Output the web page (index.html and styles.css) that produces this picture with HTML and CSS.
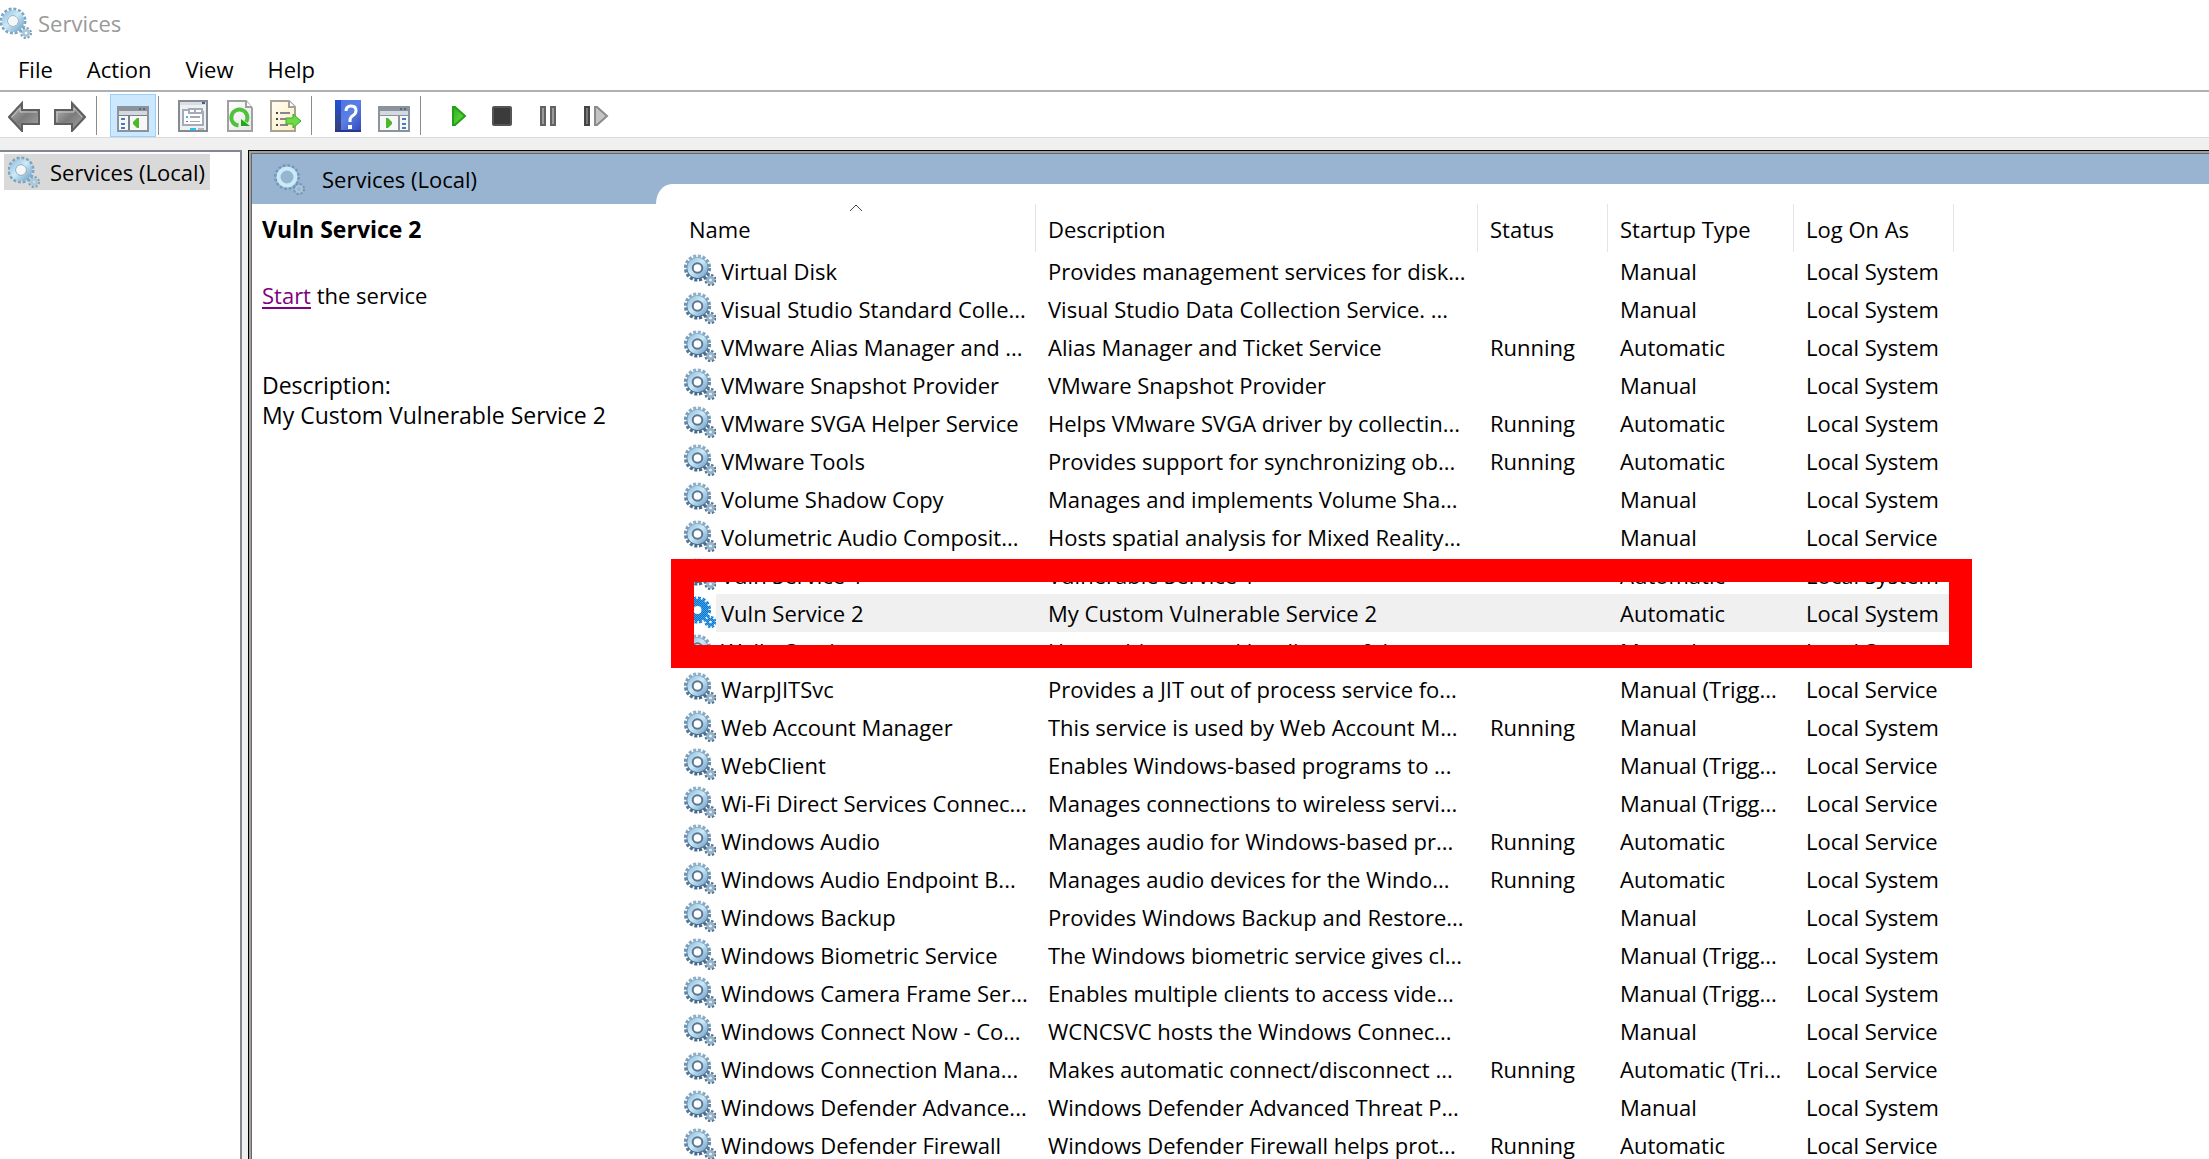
FILE: index.html
```html
<!DOCTYPE html>
<html lang="en">
<head>
<meta charset="utf-8">
<title>Services</title>
<link rel="stylesheet" href="styles.css">
</head>
<body>
<svg class="defs" aria-hidden="true">
  <defs>
    <linearGradient id="arrow" x1="0" y1="0" x2="1" y2="1"><stop offset="0" stop-color="#bdbdbd"/><stop offset=".5" stop-color="#7b7b7b"/><stop offset="1" stop-color="#a8a8a8"/></linearGradient>
    <linearGradient id="page" x1="0" y1="0" x2="1" y2="1"><stop offset="0" stop-color="#fff"/><stop offset="1" stop-color="#e6e6e6"/></linearGradient>
    <linearGradient id="cream" x1="0" y1="0" x2="1" y2="1"><stop offset="0" stop-color="#fffdf5"/><stop offset="1" stop-color="#fbeebc"/></linearGradient>
    <linearGradient id="book" x1="0" y1="0" x2="1" y2="1"><stop offset="0" stop-color="#4a6fe8"/><stop offset=".5" stop-color="#5b7fe6"/><stop offset="1" stop-color="#3148b8"/></linearGradient>
    <linearGradient id="spine" x1="0" y1="0" x2="0" y2="1"><stop offset="0" stop-color="#1f52d6"/><stop offset="1" stop-color="#3a3f70"/></linearGradient>
    <linearGradient id="green" x1="0" y1="0" x2="1" y2="1"><stop offset="0" stop-color="#2fae1c"/><stop offset="1" stop-color="#6be04a"/></linearGradient>
    <linearGradient id="teeth" x1="0" y1="0" x2="0" y2="1"><stop offset="0" stop-color="#8db1cb"/><stop offset="1" stop-color="#45698c"/></linearGradient>
    <linearGradient id="body" x1="0" y1="0" x2="1" y2="1"><stop offset="0" stop-color="#9cc6e0"/><stop offset=".45" stop-color="#cdebf8"/><stop offset="1" stop-color="#7dabcf"/></linearGradient>
    <pattern id="dither" width="2" height="2" patternUnits="userSpaceOnUse"><rect width="2" height="2" fill="#0078d7"/><rect width="1" height="1" fill="#4f9fdc"/><rect x="1" y="1" width="1" height="1" fill="#4f9fdc"/></pattern>
    <symbol id="gear" viewBox="0 0 32 32">
      <circle cx="26.500" cy="26" r="4.800" fill="none" stroke="#56758f" stroke-width="2.600" stroke-dasharray="2.300 1.470"/>
      <circle cx="26.500" cy="26" r="2.800" fill="none" stroke="#94b1c7" stroke-width="3"/>
      <circle cx="26.500" cy="26" r="1.300" fill="#dce9f1"/>
      <circle cx="13.500" cy="14" r="11.800" fill="none" stroke="url(#teeth)" stroke-width="3.600" stroke-dasharray="3 1.634"/>
      <circle cx="13.500" cy="14" r="10.400" fill="none" stroke="url(#teeth)" stroke-width="1.400"/>
      <circle cx="13.500" cy="14" r="7.600" fill="none" stroke="url(#body)" stroke-width="5"/>
      <circle cx="13.500" cy="14" r="4.800" fill="none" stroke="#5b7491" stroke-width="2"/>
    </symbol>
    <symbol id="gear-light" viewBox="0 0 32 32">
      <circle cx="26" cy="26" r="4.800" fill="none" stroke="#7fa0b8" stroke-width="2.500" stroke-dasharray="2.100 1.670"/>
      <circle cx="26" cy="26" r="2.800" fill="none" stroke="#a9c8dc" stroke-width="3"/>
      <circle cx="13" cy="14" r="11.800" fill="none" stroke="#7ba6c5" stroke-width="3.400" stroke-dasharray="2.900 1.734"/>
      <circle cx="13" cy="14" r="8.300" fill="none" stroke="url(#body)" stroke-width="5.600"/>
      <circle cx="13" cy="14" r="5.300" fill="none" stroke="#8aa9c0" stroke-width="1"/>
      <circle cx="13" cy="14" r="4.800" fill="#f4f6f8"/>
    </symbol>
    <symbol id="gear-tab" viewBox="0 0 32 32">
      <circle cx="25" cy="26" r="4.800" fill="none" stroke="#7592b0" stroke-width="2.500" stroke-dasharray="2.100 1.670"/>
      <circle cx="25" cy="26" r="3" fill="none" stroke="#a9c5db" stroke-width="2"/>
      <circle cx="13" cy="14" r="11.500" fill="none" stroke="#7597b8" stroke-width="3" stroke-dasharray="2.600 1.916"/>
      <circle cx="13" cy="14" r="8.500" fill="none" stroke="#c8ebf8" stroke-width="4"/>
    </symbol>
    <symbol id="gear-selected" viewBox="0 0 32 32">
      <circle cx="26.500" cy="26" r="4.800" fill="none" stroke="url(#dither)" stroke-width="2.600" stroke-dasharray="2.300 1.470"/>
      <circle cx="26.500" cy="26" r="2.800" fill="none" stroke="url(#dither)" stroke-width="3"/>
      <circle cx="13.500" cy="14" r="11.800" fill="none" stroke="url(#dither)" stroke-width="3.600" stroke-dasharray="3 1.634"/>
      <circle cx="13.500" cy="14" r="7.500" fill="none" stroke="url(#dither)" stroke-width="7"/>
    </symbol>
  </defs>
</svg>

<header class="titlebar">
  <svg class="icon"><use href="#gear-light"/></svg>
  <h1>Services</h1>
</header>

<nav class="menubar">
  <button>File</button>
  <button>Action</button>
  <button>View</button>
  <button>Help</button>
</nav>

<div class="toolbar" role="toolbar" aria-label="Standard">
  <button aria-label="Back"><svg class="icon"><path d="M1 17 14 3v7h17v14H14v7z" fill="url(#arrow)" stroke="#5f5f5f" stroke-width="2"/><path d="M4 17 12 8v4h17" fill="none" stroke="#c9c9c9"/></svg></button>
  <button aria-label="Forward"><svg class="icon"><path d="M31 17 18 3v7H1v14h17v7z" fill="url(#arrow)" stroke="#5f5f5f" stroke-width="2"/><path d="M3 22V12h17V8l8 9" fill="none" stroke="#c9c9c9"/></svg></button>
  <span class="sep"></span>
  <button class="pressed" aria-label="Show or hide console tree" aria-pressed="true"><svg class="icon"><path d="M1 7h30v24H1z" fill="#f7f7f7" stroke="#8b939c" stroke-width="2"/><path d="M2 8h28v3H2z" fill="#8b939c"/><path d="M2 11h28v5H2z" fill="#d3d9de"/><path d="M22 8h2v2h-2zM26 8h2v2h-2z" fill="#53687f"/><path d="M2 15h28v1H2zM11 16h2v14h-2z" fill="#77818d"/><path d="M4 18h4v2H4zM4 23h4v2H4zM4 27h4v2H4z" fill="#3f7dc4"/><path d="M22 18v10h-2l-4-4v-2l4-4z" fill="#4bb82c"/></svg></button>
  <span class="sep near"></span>
  <button aria-label="Properties"><svg class="icon"><path d="M2 1h28v30H2z" fill="#eef0f2" stroke="#858b93" stroke-width="2"/><path d="M3 2h26v3H3z" fill="#d8dee4"/><path d="M25 2h3v2h-3z" fill="#435b7c"/><path d="M6 10h6v-1h13v3h1v13H6z" fill="#fff" stroke="#a6abb9" stroke-width="2"/><path d="M12 9v4h13M18 9v4" fill="none" stroke="#a6abb9" stroke-width="2"/><path d="M9 16h2v2H9z" fill="#25c5f5"/><path d="M9 21h2v1H9z" fill="#777"/><path d="M13 16h10v2H13zM13 21h10v1H13z" fill="#a5a9ad"/><path d="M13 28h6v2h-6z" fill="#17c8ff"/><path d="M21 28h6v2h-6z" fill="#b5b9bd"/></svg></button>
  <button aria-label="Refresh"><svg class="icon"><path d="M5 1h18l6 7v23H5z" fill="url(#page)" stroke="#a0a0a0" stroke-width="2"/><path d="M23 1v6h6" fill="#fff" stroke="#a0a0a0" stroke-width="2"/><path d="M15.500 25.500A8 8 0 1 1 23 22" fill="none" stroke="#4ec23a" stroke-width="4"/><path d="M18 19v7h9z" fill="#22a816"/></svg></button>
  <button aria-label="Export list"><svg class="icon"><path d="M2 1h18l6 6v24H2z" fill="url(#cream)" stroke="#a8a294" stroke-width="2"/><path d="M20 1v6h6" fill="#fff" stroke="#a0a0a0" stroke-width="2"/><path d="M7 12h2v2H7zM7 18h2v2H7zM7 24h2v2H7z" fill="#444"/><path d="M11 12h10v2H11zM11 18h8v2h-8zM11 24h8v2h-8z" fill="#8b8396"/><path d="M17 18h7v-4l8 7-8 7v-4h-7z" fill="#6edb46" stroke="#3aad26"/></svg></button>
  <span class="sep"></span>
  <button aria-label="Help"><svg class="icon"><path d="M3 0h26v32H3z" fill="url(#book)"/><path d="M3 0h6v32H3z" fill="url(#spine)"/><path d="M3 30h26v2H3z" fill="#27378f"/><path d="M14 11q0-5 5-5t5 4.500q0 3-3 5t-3 4.500v2" fill="none" stroke="#fff" stroke-width="3"/><path d="M16 25h4v4h-4z" fill="#fff"/></svg></button>
  <button aria-label="Show or hide action pane"><svg class="icon"><path d="M1 7h30v24H1z" fill="#f7f7f7" stroke="#8b939c" stroke-width="2"/><path d="M2 8h28v3H2z" fill="#8b939c"/><path d="M2 11h28v5H2z" fill="#d3d9de"/><path d="M22 8h2v2h-2zM26 8h2v2h-2z" fill="#53687f"/><path d="M2 15h28v1H2zM20 16h2v14h-2z" fill="#8b939c"/><path d="M24 18h4v2h-4zM24 23h4v2h-4zM24 27h4v2h-4z" fill="#3f7dc4"/><path d="M8 18v10h2l4-4v-2l-4-4z" fill="#4bb82c"/></svg></button>
  <span class="sep wide"></span>
  <button aria-label="Start service"><svg class="icon"><path d="M14 7v18h2l10-9-10-9z" fill="url(#green)" stroke="#23a018" stroke-width="2"/></svg></button>
  <button aria-label="Stop service"><svg class="icon"><rect x="8" y="7" width="18" height="18" rx="1" fill="#3b3b3b" stroke="#555" stroke-width="2"/></svg></button>
  <button aria-label="Pause service"><svg class="icon"><path d="M10 7h4v18h-4zM20 7h4v18h-4z" fill="#999" stroke="#616161" stroke-width="2"/></svg></button>
  <button aria-label="Restart service"><svg class="icon"><path d="M8 7h4v18H8z" fill="#777" stroke="#444" stroke-width="2"/><path d="M18 7v18h2l10-9-10-9z" fill="#c4c4c4" stroke="#8b8b8b" stroke-width="2"/></svg></button>
</div>

<main class="workspace">
  <aside class="tree">
    <a class="node" href="#services"><svg class="icon"><use href="#gear-light"/></svg>Services (Local)</a>
  </aside>

  <section class="pane" id="services">
    <div class="band"><svg class="icon"><use href="#gear-tab"/></svg><h2>Services (Local)</h2></div>
    <div class="split">
      <div class="details">
        <h3>Vuln Service 2</h3>
        <p class="action"><a href="#start">Start</a> the service</p>
        <p class="description">Description:<br>My Custom Vulnerable Service 2</p>
      </div>
      <div class="list">
        <table>
          <colgroup><col class="c-name"><col class="c-desc"><col class="c-status"><col class="c-startup"><col class="c-logon"></colgroup>
          <thead>
            <tr>
              <th aria-sort="ascending">Name<svg class="caret" viewBox="0 0 14 8"><path d="M1 7l6-6 6 6" fill="none" stroke="#444"/></svg></th>
              <th>Description</th><th>Status</th><th>Startup Type</th><th>Log On As</th>
            </tr>
          </thead>
          <tbody>
            <tr><td><svg class="icon"><use href="#gear"/></svg>Virtual Disk</td><td>Provides management services for disk...</td><td></td><td>Manual</td><td>Local System</td></tr>
            <tr><td><svg class="icon"><use href="#gear"/></svg>Visual Studio Standard Colle...</td><td>Visual Studio Data Collection Service. ...</td><td></td><td>Manual</td><td>Local System</td></tr>
            <tr><td><svg class="icon"><use href="#gear"/></svg>VMware Alias Manager and ...</td><td>Alias Manager and Ticket Service</td><td>Running</td><td>Automatic</td><td>Local System</td></tr>
            <tr><td><svg class="icon"><use href="#gear"/></svg>VMware Snapshot Provider</td><td>VMware Snapshot Provider</td><td></td><td>Manual</td><td>Local System</td></tr>
            <tr><td><svg class="icon"><use href="#gear"/></svg>VMware SVGA Helper Service</td><td>Helps VMware SVGA driver by collectin...</td><td>Running</td><td>Automatic</td><td>Local System</td></tr>
            <tr><td><svg class="icon"><use href="#gear"/></svg>VMware Tools</td><td>Provides support for synchronizing ob...</td><td>Running</td><td>Automatic</td><td>Local System</td></tr>
            <tr><td><svg class="icon"><use href="#gear"/></svg>Volume Shadow Copy</td><td>Manages and implements Volume Sha...</td><td></td><td>Manual</td><td>Local System</td></tr>
            <tr><td><svg class="icon"><use href="#gear"/></svg>Volumetric Audio Composit...</td><td>Hosts spatial analysis for Mixed Reality...</td><td></td><td>Manual</td><td>Local Service</td></tr>
            <tr><td><svg class="icon"><use href="#gear"/></svg>Vuln Service 1</td><td>Vulnerable Service 1</td><td></td><td>Automatic</td><td>Local System</td></tr>
            <tr class="selected"><td><svg class="icon"><use href="#gear-selected"/></svg>Vuln Service 2</td><td>My Custom Vulnerable Service 2</td><td></td><td>Automatic</td><td>Local System<span class="marker"></span></td></tr>
            <tr><td><svg class="icon"><use href="#gear"/></svg>WalletService</td><td>Hosts objects used by clients of the ...</td><td></td><td>Manual</td><td>Local System</td></tr>
            <tr><td><svg class="icon"><use href="#gear"/></svg>WarpJITSvc</td><td>Provides a JIT out of process service fo...</td><td></td><td>Manual (Trigg...</td><td>Local Service</td></tr>
            <tr><td><svg class="icon"><use href="#gear"/></svg>Web Account Manager</td><td>This service is used by Web Account M...</td><td>Running</td><td>Manual</td><td>Local System</td></tr>
            <tr><td><svg class="icon"><use href="#gear"/></svg>WebClient</td><td>Enables Windows-based programs to ...</td><td></td><td>Manual (Trigg...</td><td>Local Service</td></tr>
            <tr><td><svg class="icon"><use href="#gear"/></svg>Wi-Fi Direct Services Connec...</td><td>Manages connections to wireless servi...</td><td></td><td>Manual (Trigg...</td><td>Local Service</td></tr>
            <tr><td><svg class="icon"><use href="#gear"/></svg>Windows Audio</td><td>Manages audio for Windows-based pr...</td><td>Running</td><td>Automatic</td><td>Local Service</td></tr>
            <tr><td><svg class="icon"><use href="#gear"/></svg>Windows Audio Endpoint B...</td><td>Manages audio devices for the Windo...</td><td>Running</td><td>Automatic</td><td>Local System</td></tr>
            <tr><td><svg class="icon"><use href="#gear"/></svg>Windows Backup</td><td>Provides Windows Backup and Restore...</td><td></td><td>Manual</td><td>Local System</td></tr>
            <tr><td><svg class="icon"><use href="#gear"/></svg>Windows Biometric Service</td><td>The Windows biometric service gives cl...</td><td></td><td>Manual (Trigg...</td><td>Local System</td></tr>
            <tr><td><svg class="icon"><use href="#gear"/></svg>Windows Camera Frame Ser...</td><td>Enables multiple clients to access vide...</td><td></td><td>Manual (Trigg...</td><td>Local System</td></tr>
            <tr><td><svg class="icon"><use href="#gear"/></svg>Windows Connect Now - Co...</td><td>WCNCSVC hosts the Windows Connec...</td><td></td><td>Manual</td><td>Local Service</td></tr>
            <tr><td><svg class="icon"><use href="#gear"/></svg>Windows Connection Mana...</td><td>Makes automatic connect/disconnect ...</td><td>Running</td><td>Automatic (Tri...</td><td>Local Service</td></tr>
            <tr><td><svg class="icon"><use href="#gear"/></svg>Windows Defender Advance...</td><td>Windows Defender Advanced Threat P...</td><td></td><td>Manual</td><td>Local System</td></tr>
            <tr><td><svg class="icon"><use href="#gear"/></svg>Windows Defender Firewall</td><td>Windows Defender Firewall helps prot...</td><td>Running</td><td>Automatic</td><td>Local Service</td></tr>
          </tbody>
        </table>
      </div>
    </div>
  </section>
</main>
</body>
</html>
```
FILE: styles.css
```css
* {
  box-sizing: border-box;
}

body {
  margin: 0;
  height: 100vh;
  display: flex;
  flex-direction: column;
  overflow: hidden;
  background: #fff;
  color: #000;
  font: 22px/30px "Open Sans", "Noto Sans", sans-serif;
}

h1, h2, h3, p {
  margin: 0;
  font-size: 22px;
  font-weight: 400;
}

button {
  border: 1px solid transparent;
  background: none;
  color: inherit;
  font: inherit;
}

.defs {
  position: absolute;
  width: 0;
  height: 0;
}

.icon {
  display: block;
  flex: none;
  width: 32px;
  height: 32px;
}

.titlebar {
  display: flex;
  align-items: center;
  gap: 6px;
  height: 48px;
  padding-bottom: 2px;
  color: #999;
}

.menubar {
  display: flex;
  align-items: center;
  height: 44px;
  padding-left: 8px;
  border-bottom: 2px solid #b0b0b0;
}

.menubar button {
  padding: 0 16px;
}

.menubar button:first-child {
  padding-left: 9px;
}

.toolbar {
  display: flex;
  align-items: flex-start;
  height: 46px;
  padding: 2px 1px 0;
  border-bottom: 1px solid #dadada;
}

.toolbar button {
  width: 46px;
  height: 43px;
  padding: 5px 6px;
}

.toolbar .pressed {
  border-color: #99d1ff;
  background: #cce8ff;
}

.sep {
  width: 1px;
  height: 39px;
  margin: 2px 13px 0 3px;
  background: #8c8c8c;
}

.sep.near {
  margin: 2px 11px 0 2px;
}

.sep.wide {
  margin-right: 11px;
}

.workspace {
  flex: 1;
  display: flex;
  gap: 6px;
  min-height: 0;
  padding-top: 12px;
  background: #f0f0f0;
}

.tree {
  flex: none;
  width: 242px;
  padding: 2px 0 0 4px;
  border: solid #828790;
  border-width: 2px 2px 0 0;
  background: #fff;
}

.node {
  display: flex;
  align-items: center;
  gap: 10px;
  width: 206px;
  height: 36px;
  padding-left: 4px;
  background: #d9d9d9;
  color: #000;
  text-decoration: none;
  white-space: nowrap;
}

.pane {
  flex: 1;
  min-width: 0;
  padding: 3px 0 0 3px;
  border: solid #000;
  border-width: 1px 0 0 1px;
  background: #fff;
  box-shadow: inset 2px 2px #a0a0a0, inset 3px 3px #696969;
}

.band {
  display: flex;
  align-items: center;
  gap: 16px;
  height: 50px;
  padding-left: 22px;
  background: #99b4d1;
}

.split {
  display: flex;
}

.details {
  flex: none;
  width: 404px;
  padding: 10px;
}

.details h3,
.description {
  font-size: 23px;
}

.details h3 {
  font-weight: 700;
}

.action {
  margin: 36px 0 60px;
}

.action a {
  color: #800080;
  text-decoration-thickness: 2px;
  text-underline-offset: 3px;
}

.list {
  flex: 1;
  min-width: 0;
  margin-top: -20px;
  padding: 20px 0 0 21px;
  border-top-left-radius: 16px 20px;
  background: #fff;
}

table {
  width: 1277px;
  table-layout: fixed;
  border-collapse: separate;
  border-spacing: 0;
}

.c-name { width: 359px; }
.c-desc { width: 442px; }
.c-status { width: 130px; }
.c-startup { width: 186px; }
.c-logon { width: 160px; }

th, td {
  padding: 0 0 0 12px;
  text-align: left;
  font-weight: 400;
  white-space: nowrap;
}

th {
  position: relative;
  height: 48px;
  padding-top: 2px;
  border-right: 1px solid #e5e5e5;
}

.caret {
  position: absolute;
  top: 0;
  left: 50%;
  width: 14px;
  height: 8px;
  margin-left: -7px;
}

td {
  height: 38px;
}

td:first-child {
  display: flex;
  align-items: flex-start;
  gap: 5px;
  padding: 2px 0 0 7px;
  line-height: 34px;
}

.selected {
  position: relative;
}

.selected td {
  background: #f0f0f0;
}

.selected td:first-child {
  background: linear-gradient(to right, #fff 39px, #f0f0f0 39px);
}

.marker {
  position: absolute;
  inset: -35px -18px -36px -6px;
  border: 23px solid #f00;
  pointer-events: none;
}
```
